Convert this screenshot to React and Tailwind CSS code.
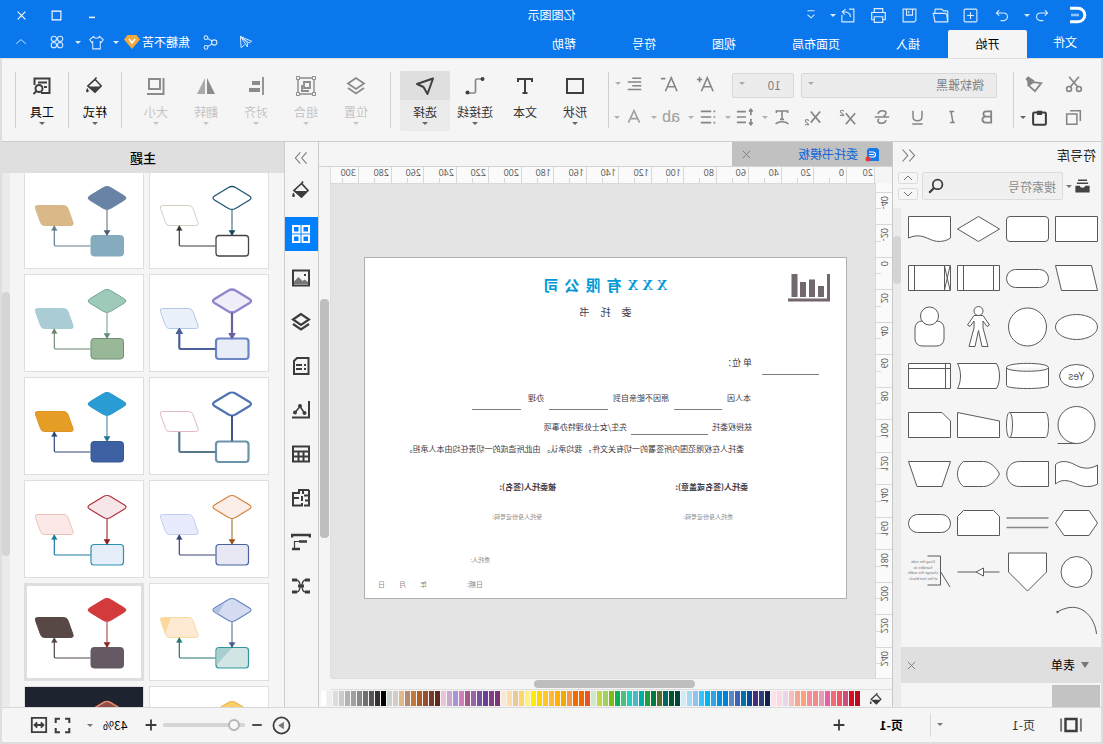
import { useState } from 'react';

const SWATCHES = [
    '#b90c1c', '#d90b22', '#c8507a', '#ee5566', '#ee6b75', '#e9609f', '#e89bb5', '#ef8d88', '#f1909b', '#ffa07a', '#f2a894', '#f5bfb8', '#e8d5ea', '#ffd6e4', '#ffe0e6',
    '#12204d', '#2a3f75', '#4a2c7f', '#0a4a94', '#0070ab', '#4063b3', '#5b87c8', '#0080d6', '#0090dd', '#30a5e6', '#00b5ee', '#33c3ff', '#8fc3ee', '#a5daf0', '#d0ecf8',
    '#00443a', '#00552c', '#00695f', '#556b2f', '#007a42', '#259b40', '#00aea4', '#4fb8c4', '#1fd1bb', '#4abf7e', '#0bb156', '#80bb11', '#a0d060', '#c0d844', '#cde8cc',
    '#e9541f', '#ee6a00', '#f06c00', '#f79646', '#f2a900', '#ffb000', '#ffb833', '#ffc52b', '#ffd500', '#ffec00', '#fff27a', '#ffd56b', '#e8ca9a', '#ffdcaa', '#fce8d0',
    '#7a3576', '#863c80', '#6a3f99', '#77539e', '#9867a3', '#a3598a', '#d080b8', '#ab94d5', '#c9a9cc', '#edc3dc',
    '#5f2a1c', '#763a2c', '#964f30', '#b05e28', '#c27a3c', '#b38b73', '#dfb98a', '#d6cbc4', '#cad3cb',
    '#000000', '#37302f', '#555555', '#706f6f', '#8a8a89', '#a0a09f', '#b2b4b3', '#c9cccb', '#dcdcdc', '#eeeeee', '#ffffff',
];

// d = diamond, r = rectangle, p = parallelogram, each [fill, stroke, stroke width]
// a = arrow down, b = arrow up, each [colour, width, head]
const THEMES = [
    { d: ['#fff', '#1d5470', 1.3], r: ['#fff', '#444', 1.3], p: ['#fff', '#d5cdc0', 1], a: ['#6d909b', 1.5, '#12475c'], b: ['#3c3c3c', 1.2, '#333'] },
    { d: ['#6983a6', '#6983a6', 1], r: ['#85abbe', '#85abbe', 1], p: ['#d9b987', '#d9b987', 1], a: ['#9299aa', 1.5, '#4c5a70'], b: ['#607d8f', 1.2, '#607d8f'] },
    { d: ['#efeef9', '#9186cb', 2.4], r: ['#e9edf8', '#6a86c5', 2.2], p: ['#ebf1fa', '#b0c8e4', 1], a: ['#6c619c', 2.2, '#6c619c'], b: ['#4c5f96', 2.2, '#4c5f96'] },
    { d: ['#9ecbb9', '#76a393', 1], r: ['#98b898', '#6f9077', 1], p: ['#a9ccd5', '#a9ccd5', 1], a: ['#a1b8b2', 1.5, '#628a7f'], b: ['#64836b', 1.1, '#64836b'] },
    { d: ['#fff', '#5274b3', 2.2], r: ['#fff', '#6b93aa', 2.2], p: ['#fff', '#e0b8c5', 1], a: ['#3d5788', 2, null], b: ['#58788a', 2.2, null] },
    { d: ['#2a9cd4', '#2793c8', 1], r: ['#3d60a2', '#38588f', 1], p: ['#e59d25', '#dc9321', 1], a: ['#74a8c2', 1.5, '#1f7199'], b: ['#2f4678', 1.2, '#2f4678'] },
    { d: ['#fbede8', '#d4833c', 1.2], r: ['#e7e8f3', '#4a62a1', 1.2], p: ['#e7ebfb', '#c3cdf2', 1], a: ['#be9665', 1.5, '#9c5318'], b: ['#364474', 1.2, '#364474'] },
    { d: ['#f6e6e9', '#b1323c', 1.2], r: ['#e4effa', '#2c91b2', 1.2], p: ['#fce9e7', '#eac3b8', 1], a: ['#b86068', 1.5, '#8f1a22'], b: ['#1b7a9e', 1.2, '#1b7a9e'] },
    { d: ['#d3dcf0', '#6786c0', 1.2], r: ['#d2e4e3', '#30969a', 1.2], p: ['#fee9d3', '#f4dc9e', 1], a: ['#8494b8', 1.5, '#47608f'], b: ['#21766e', 1.2, '#21766e'], shade: ['#b3c2e3', '#a7cfcd', '#ffd79e'] },
    { d: ['#d23a3c', '#d23a3c', 1], r: ['#655a63', '#655a63', 1], p: ['#584845', '#584845', 1], a: ['#bd7678', 1.5, '#8e2326'], b: ['#50454a', 1.2, '#50454a'], selected: true },
    { d: ['#ffd06a', '#eab84a', 1.2], r: ['#fff', '#d9a53a', 1.2], p: ['#fff', '#ccc', 1], a: ['#aaa', 1.5, '#777'], b: ['#777', 1.2, '#777'] },
    { d: ['#8d4f4a', '#e6866d', 1.6], r: ['#333', '#fff', 1.2], p: ['#333', '#ccc', 1], a: ['#aaa', 1.5, '#aaa'], b: ['#aaa', 1.2, '#aaa'], dark: true },
];

const SHAPES = [
    ['rect', <path d="M3.5 12.5h42v25h-42z" />],
    ['rounded', <rect x="3.5" y="12.5" width="42" height="25" rx="3.5" />],
    ['diamond', <path d="M24.5 12.5l21 12.5-21 12.5L3.5 25z" />],
    ['document', <path d="M3.5 12.5h42V34c-13-6-19 2-28 3.3-5 .7-11-.8-14-3.300z" />],
    ['data', <path d="M9.500 12.500h36l-6 25h-36z" />],
    ['terminator', <rect x="3.500" y="16.500" width="42" height="18" rx="9" />],
    ['process', <path d="M3.5 12.5h42v25h-42zM9.5 12.500v25M39.500 12.500v25" />],
    ['process-x', <path d="M3.5 12.5h42v25h-42zM9.5 12.500v25M39.500 12.500v25M4 13l5.500 24M9.500 13L4 37" />],
    ['ellipse', <ellipse cx="24.500" cy="25" rx="21" ry="12.500" />],
    ['circle', <circle cx="24.500" cy="25" r="19" />],
    ['person', <g><path d="M20 13.500h9l6.500 9.500-2.500 1.500-4-5.500v7l5 18.500h-6l-3.500-16-3.500 16h-6l5-18.500v-7l-4 5.500-2.500-1.500z" /><circle cx="24.500" cy="9" r="4.500" /></g>],
    ['user', <g><rect x="10" y="19" width="29" height="25" rx="7" /><circle cx="24.500" cy="14" r="9" /></g>],
    ['yes', <g><ellipse cx="24.500" cy="25" rx="17" ry="11.500" /><text x="24.500" y="28.500" textAnchor="middle" fontSize="10" fill="#555" stroke="none">Yes</text></g>],
    ['cylinder', <path d="M3.5 16.500c0-5.500 42-5.500 42 0v18c0 4-42 4-42 0zc0 5 42 5 42 0" />],
    ['stored', <path d="M6.500 12.500h39c-4 7-4 18 0 25h-39c-4-6-4-19 0-25z" />],
    ['internal', <path d="M3.5 12.5h42v25h-42zM3.500 17.500h42M8.500 12.500v25" />],
    ['tape', <g><circle cx="24.500" cy="25" r="18.500" /><path d="M24.500 43.500h19" /></g>],
    ['direct', <path d="M6.500 12.500h36c4 0 4 25 0 25h-36c-4 0-4-25 0-25zM42.500 12.500c-4 0-4 25 0 25" />],
    ['manual', <path d="M3.500 21l42-8.500v25h-42z" />],
    ['card', <path d="M3.500 21l8.500-8.500h33.500v25h-42z" />],
    ['wave', <path d="M3.500 16c7 4.500 15 4 22 0s15-5 20-.5V35c-5-4.500-12-4.500-20-.5-8 4-16 4-22 .5z" />],
    ['delay', <path d="M3.500 12.500h29c17 0 17 25 0 25h-29z" />],
    ['display', <path d="M3.500 25c3-6 9-12.500 16-12.500h20c8 6 8 19 0 25h-20c-7 0-13-6.500-16-12.500z" />],
    ['trapezoid', <path d="M3.500 12.500h42l-8.500 25h-25z" />],
    ['hexagon', <path d="M12 12.500h25l8.500 12.500-8.500 12.500h-25L3.500 25z" />],
    ['parallel', <path d="M3.500 20h42M3.500 29.500h42" stroke="#888" strokeWidth="1.500" />],
    ['loop', <path d="M3.500 18.500l6-6h30l6 6v19h-42z" />],
    ['pill', <rect x="3.500" y="16.500" width="42" height="18" rx="9" />],
    ['connector', <circle cx="24.500" cy="25" r="15.500" />],
    ['offpage', <path d="M5.500 6h38v19l-19 19-19-19z" />],
    ['arrow', <path d="M3.500 25h16M27 25h18.500M19.500 21v8l7.500-4z" />],
    ['note', (
        <g>
            <path d="M26.500 9H13.500v29h13M13.500 24.500L4 40" fill="none" />
            <g fill="#777" stroke="none" fontSize="4" textAnchor="middle">
                <text x="31" y="16">Drag the side</text>
                <text x="31" y="22">handles to</text>
                <text x="31" y="27">change the width</text>
                <text x="31" y="33">of the text block.</text>
            </g>
        </g>
    )],
    ['arc', <g><path d="M4.500 38C6 22 18 8 34 12q5 1 9.500 4" fill="none" /><circle cx="43.500" cy="16" r=".8" fill="#555" /></g>],
];

const H_LABELS = [0, 20, 40, 60, 80, 100, 120, 140, 160, 180, 200, 220, 240, 260, 280, 300];
const V_LABELS = [-40, -20, 0, 20, 40, 60, 80, 100, 120, 140, 160, 180, 200, 220, 240];

function Icon({ size = 20, w = 1.6, className = '', children }) {
    return (
        <svg width={size} height={size} viewBox="0 0 20 20" fill="none" stroke="currentColor" strokeWidth={w} className={`shrink-0 ${className}`} aria-hidden="true">
            {children}
        </svg>
    );
}

function Caret({ className = '' }) {
    return (
        <svg width="6" height="3" viewBox="0 0 6 3" fill="currentColor" className={`shrink-0 ${className}`} aria-hidden="true">
            <path d="M0 0h6L3 3z" />
        </svg>
    );
}

function Bucket({ size = 20 }) {
    return (
        <Icon size={size} w={1.7}>
            <path d="M8 1.500l2 3M9.500 3.500L17 10.500 9.500 17 3 10.500z" />
            <path d="M3.500 11h13l-7 6.500z" fill="currentColor" stroke="none" />
            <path d="M17.500 12.500c2 3 1.500 4.500 0 4.500s-2-1.500 0-4.500z" fill="currentColor" stroke="none" />
        </Icon>
    );
}

const Layers = ({ size = 20, w = 1.8 }) => (
    <Icon size={size} w={w}>
        <path d="M10 2l8 5.500-8 5.500-8-5.500zM2 12l8 5.500 8-5.500" />
    </Icon>
);

function IconButton({ label, className = '', children }) {
    return (
        <button type="button" aria-label={label} className={`flex items-center justify-center shrink-0 ${className}`}>
            {children}
        </button>
    );
}

function TitleBar() {
    const tabs = ['插入', '页面布局', '视图', '符号', '帮助'];
    return (
        <header className="bg-[#0a78ec] text-white text-xs shrink-0">
            <div className="grid grid-cols-3 h-[30px] items-center">
                <div className="flex items-center text-blue-100">
                    <svg width="18" height="18" viewBox="0 0 18 18" fill="none" className="ml-4 mr-4" aria-hidden="true">
                        <path d="M17 2.200H9a6.800 6.800 0 0 0 0 13.600h8" stroke="#fff" strokeWidth="3" />
                        <path d="M8 9h8" stroke="#8fc4ff" strokeWidth="2.500" />
                    </svg>
                    <IconButton label="撤销" className="w-[22px]"><Icon size={14} w={1.500}><path d="M6 3L2 7l4 4M2 7h10c7 0 8 9 1 11H8" /></Icon></IconButton>
                    <Caret className="mx-[1px]" />
                    <IconButton label="重做" className="w-[42px]"><Icon size={14} w={1.500}><path d="M14 3l4 4-4 4M18 7H8c-7 0-8 9-1 11h5" /></Icon></IconButton>
                    <IconButton label="新建" className="w-5"><Icon size={15} w={1.500}><rect x="1.500" y="1.500" width="17" height="17" rx="1.500" /><path d="M10 5.500v9M5.500 10h9" /></Icon></IconButton>
                    <IconButton label="打开" className="w-10"><Icon size={17} w={1.400}><path d="M1.500 17.500V5.500q0-1 1-1h4l2-2h7q1 0 1 1v4M1.500 17.500h15l2-10H5q-2 0-2.500 2z" /></Icon></IconButton>
                    <IconButton label="保存" className="w-[22px]"><Icon size={15} w={1.500}><path d="M1.500 1.500h17v17h-15l-2-2zM6 1.500v8h8v-8M11 4v3" /></Icon></IconButton>
                    <IconButton label="打印" className="w-10"><Icon size={17} w={1.400}><path d="M5 6V2h10v4M5 15H2V6.500h16V15h-3M5 11.500h10V18H5z" /></Icon></IconButton>
                    <IconButton label="导出" className="w-[22px]"><Icon size={15} w={1.500}><path d="M8 1.500H1.500v17h16V9M6 12c0-5 4-7 10-7M12.500 1.500L17 5l-3.500 4" /></Icon></IconButton>
                    <Caret className="ml-px" />
                    <IconButton label="自定义" className="w-[38px]"><Icon size={14} w={1.500}><path d="M5 4h10M5 9.500l5 4.500 5-4.500" /></Icon></IconButton>
                </div>
                <h1 className="text-center leading-5">亿图图示</h1>
                <div className="flex justify-end items-center pr-1">
                    <IconButton label="最小化" className="w-[35px]"><Icon size={12} w={2.500}><path d="M5 14h10" /></Icon></IconButton>
                    <IconButton label="最大化" className="w-[35px]"><Icon size={11} w={2}><path d="M2 2h16v16H2z" /></Icon></IconButton>
                    <IconButton label="关闭" className="w-[35px]"><Icon size={11} w={2}><path d="M3 3l14 14M17 3L3 17" /></Icon></IconButton>
                </div>
            </div>
            <nav className="flex h-7">
                <a href="#file" className="w-[76px] text-center leading-6">文件</a>
                <a href="#home" className="w-[79px] text-center leading-7 bg-[#f5f5f5] text-black rounded-t-[2px]">开始</a>
                {tabs.map((t) => (
                    <a key={t} href={`#${t}`} className="px-7 leading-7">{t}</a>
                ))}
                <div className="ml-auto flex items-center text-blue-100 h-6 pr-1">
                    <IconButton label="发送" className="w-9"><Icon size={14} w={1.400}><path d="M18 2L2 9l3.500 2.500zM18 2L8 11v6zM18 2l-1 16-5-4" /></Icon></IconButton>
                    <IconButton label="分享" className="w-9"><Icon size={15} w={1.400}><circle cx="5" cy="10" r="3.500" /><circle cx="16" cy="3.500" r="2.500" /><circle cx="16" cy="16.500" r="2.500" /><path d="M8 8l6-3.500M8 12l6 3.500" /></Icon></IconButton>
                    <a href="#user" className="flex items-center text-white ml-[2px]">
                        焦糖不苦
                        <svg width="16" height="14" viewBox="0 0 16 14" className="ml-[2px]" aria-hidden="true">
                            <path d="M3.500 0h9L16 4.500 8 14 0 4.500z" fill="#f3a93c" />
                            <path d="M5 4l3 4 3-4" fill="none" stroke="#fff" strokeWidth="1.500" />
                        </svg>
                    </a>
                    <Caret className="ml-[5px]" />
                    <IconButton label="皮肤" className="w-8"><Icon size={15} w={1.400}><path d="M6 2L1 6l2.500 4L5 9v9.500h10V9l1.500 1L19 6l-5-4c-1 3-7 3-8 0z" /></Icon></IconButton>
                    <Caret />
                    <IconButton label="应用" className="w-9"><Icon size={14} w={1.500}><circle cx="5.500" cy="5.500" r="3.800" /><circle cx="14.500" cy="5.500" r="3.800" /><circle cx="5.500" cy="14.500" r="3.800" /><circle cx="14.500" cy="14.500" r="3.800" /></Icon></IconButton>
                    <IconButton label="收起功能区" className="w-[35px]"><Icon size={12} w={1.500}><path d="M2 13l8-7 8 7" /></Icon></IconButton>
                </div>
            </nav>
        </header>
    );
}

const Sep = () => <div className="w-px h-14 mt-px bg-[#cfcfcf] shrink-0" />;

function BigButton({ label, icon, disabled, active, strong, noCaret }) {
    return (
        <button
            type="button"
            disabled={disabled}
            className={`w-[50px] h-[60px] flex flex-col items-center shrink-0 rounded-[2px] text-xs ${active ? 'bg-[#ebebeb]' : ''} ${disabled ? 'text-[#c4c4c4]' : strong ? 'text-black' : 'text-[#333]'}`}
        >
            <span className={`w-full h-[29px] flex items-center justify-center rounded-t-[2px] ${active ? 'bg-[#dfdfdf]' : ''} ${disabled ? 'text-[#8b8b8b]' : 'text-[#3f3f3f]'}`}>{icon}</span>
            <span className="leading-5 mt-[2px]">{label}</span>
            {!noCaret && <Caret className={disabled ? 'text-[#c4c4c4]' : 'text-[#666]'} />}
        </button>
    );
}

function DropIcon({ label, children }) {
    return (
        <IconButton label={label} className="w-[37px]">
            <span className="w-[26px] flex justify-center">{children}</span>
            <Caret className="text-[#b0b0b0] mr-1 ml-px" />
        </IconButton>
    );
}

const selectClass = 'appearance-none h-[25px] w-full rounded-[2px] border border-[#d8d8d8] bg-[#ececec] text-xs text-[#808080] outline-none';

function Ribbon() {
    return (
        <div className="flex h-[83px] pt-3 border-b border-[#cdcdcd] text-[#858585] shrink-0">
            <div className="w-[87px] pl-[7px] flex flex-col gap-[9px]">
                <div className="flex h-[25px]">
                    <IconButton label="剪切" className="w-10"><Icon size={18} w={1.800}><circle cx="4.500" cy="15.500" r="2.700" /><circle cx="15.500" cy="15.500" r="2.700" /><path d="M6 13L15.500 2M14 13L4.500 2" /></Icon></IconButton>
                    <IconButton label="格式刷" className="w-10"><Icon size={18} w={2}><path d="M11 8l-9 1 7 9 7-6.500z" /><path d="M9.500 6l7.500 7 .5-6 2-2.500-3-3-3 2z" fill="currentColor" stroke="none" /></Icon></IconButton>
                </div>
                <div className="flex h-6">
                    <IconButton label="复制" className="w-10"><Icon size={17} w={1.800}><path d="M6 6h12v12H6zM2 14V2h12" /></Icon></IconButton>
                    <IconButton label="粘贴" className="w-10 text-[#3c3c3c]">
                        <Icon size={17} w={2.400}><rect x="2.500" y="4" width="15" height="14.500" rx="1.500" /><path d="M7 2h6v5H7z" fill="currentColor" stroke="none" /></Icon>
                        <Caret className="ml-[5px] text-[#666]" />
                    </IconButton>
                </div>
            </div>
            <Sep />
            <div className="w-[404px] pl-2 flex flex-col gap-[9px]">
                <div className="flex h-[25px] pl-2">
                    <label className="relative w-[196px] text-[#aaa]">
                        <select aria-label="字体" className={`${selectClass} pl-3`}><option>微软雅黑</option></select>
                        <Caret className="absolute right-[7px] top-[11px]" />
                    </label>
                    <label className="relative w-[62px] ml-[7px] text-[#aaa]">
                        <select aria-label="字号" className={`${selectClass} pl-3`}><option>10</option></select>
                        <Caret className="absolute right-[7px] top-[11px]" />
                    </label>
                    <IconButton label="增大字号" className="w-9 ml-[9px]"><Icon size={18} w={1.800}><path d="M1 18L7.500 3 14 18M3.500 13h8M13 5h6M16 2v6" /></Icon></IconButton>
                    <IconButton label="减小字号" className="w-9"><Icon size={18} w={1.800}><path d="M1 18L7.500 3 14 18M3.500 13h8M14 4h5" /></Icon></IconButton>
                    <div className="ml-[3px] flex"><DropIcon label="对齐"><Icon size={15} w={2.200}><path d="M1 3h12M1 8h18M1 13h12M1 18h18" /></Icon></DropIcon></div>
                </div>
                <div className="flex h-6">
                    <IconButton label="加粗" className="w-[35px]"><Icon size={14} w={2.600}><path d="M4 2h7c6 0 5 7.500 0 7.500H4zM4 9.500h8c6.500 0 5.500 8.500 0 8.500H4z" /></Icon></IconButton>
                    <IconButton label="斜体" className="w-[35px]"><Icon size={14} w={2.200}><path d="M7 2h7M6 18h7M11.500 2L8.500 18" /></Icon></IconButton>
                    <IconButton label="下划线" className="w-[35px]"><Icon size={15} w={2}><path d="M4 1v8c0 7 12 7 12 0V1M3 18.500h14" /></Icon></IconButton>
                    <IconButton label="删除线" className="w-[35px]"><Icon size={16} w={2}><path d="M1 10h18M15 6c-1-5-10-5-10-1 0 2 1 3 3 4M5 14c1 5 10 5 10 1 0-1-.5-2-1-3" /></Icon></IconButton>
                    <IconButton label="上标" className="w-[35px]"><Icon size={17} w={2}><path d="M1 5l11 13M12 5L1 18" /><path d="M14.500 3c0-2 4-2 4 0 0 1.500-4 3-4 4.500h4.500" strokeWidth="1.200" /></Icon></IconButton>
                    <IconButton label="下标" className="w-[35px]"><Icon size={17} w={2}><path d="M1 3l11 13M12 3L1 16" /><path d="M14.500 14c0-2 4-2 4 0 0 1.500-4 3-4 4.500h4.500" strokeWidth="1.200" /></Icon></IconButton>
                    <DropIcon label="文字效果"><Icon size={16} w={2}><path d="M3 5V2.500h14V5M10 2.500V13M7.500 13h5M2 18.500c4-3.500 12-3.500 16 0" /></Icon></DropIcon>
                    <DropIcon label="行距"><Icon size={18} w={1.800}><path d="M9 4h10M9 10h10M9 16h10M3.500 2v6M1.500 4l2-2.500L5.500 4M3.500 12v6M1.500 16l2 2.500L5.500 16" /></Icon></DropIcon>
                    <DropIcon label="项目符号"><Icon size={16} w={2}><path d="M6 3h13M6 10h13M6 17h13M1 3h2M1 10h2M1 17h2" /></Icon></DropIcon>
                    <DropIcon label="文字间距"><span className="text-base leading-5 text-[#a0a0a0] font-['Liberation_Sans']">ab</span></DropIcon>
                    <DropIcon label="字体颜色"><Icon size={16} w={2} className="text-[#a0a0a0]"><path d="M3 17L10 2l7 15M5 12h10" /></Icon></DropIcon>
                </div>
            </div>
            <Sep />
            <div className="flex px-2">
                <BigButton label="形状" icon={<Icon w={2}><path d="M2 3h16v14H2z" /></Icon>} />
                <BigButton label="文本" noCaret icon={<Icon w={2}><path d="M3 6V3h14v3M10 3v14M7.500 17h5" /></Icon>} />
                <BigButton label="连接线" icon={<Icon w={1.700}><path d="M3 3h5q1.500 0 1.500 1.500v11q0 1.500 1.500 1.500h5" stroke="#888" /><circle cx="2.500" cy="3" r="2" fill="currentColor" stroke="none" /><circle cx="17.500" cy="16.500" r="2" fill="currentColor" stroke="none" /></Icon>} />
                <BigButton label="选择" active icon={<Icon w={2}><path d="M2 2.500l16 5.500-6.500 3L7.500 18z" strokeLinejoin="round" /></Icon>} />
            </div>
            <div className="pl-px"><Sep /></div>
            <div className="flex px-2 ml-px">
                <BigButton label="位置" disabled icon={<Layers />} />
                <BigButton label="组合" disabled icon={<Icon w={1.400}><path d="M2 2h16v16H2z" /><path d="M6 6h6v6H6zM14 9v6H8v-1" strokeWidth="1.800" /><path d="M.5.500h3v3h-3zM16.500.500h3v3h-3zM.5 16.500h3v3h-3zM16.500 16.500h3v3h-3z" fill="#f5f5f5" strokeWidth="1" /></Icon>} />
                <BigButton label="对齐" disabled icon={<Icon w={1.800}><path d="M3 1v18" /><path d="M6 5h8v4H6zM6 12h11v4H6z" fill="currentColor" stroke="none" /></Icon>} />
                <BigButton label="翻转" disabled icon={<Icon><path d="M9 2v16H1z" fill="#8b8b8b" stroke="none" /><path d="M11 2v16h8z" fill="#aaa" stroke="none" /></Icon>} />
                <BigButton label="大小" disabled icon={<Icon w={2}><path d="M6 3h11v10H6zM2.500 2v16H19" /></Icon>} />
            </div>
            <div className="pl-px"><Sep /></div>
            <div className="px-px"><BigButton label="样式" strong icon={<Bucket size={19} />} /></div>
            <Sep />
            <div className="px-px"><BigButton label="工具" strong icon={<Icon w={2}><path d="M11 17H2.500V2.500h15V9M5 6.500h9M5 11h3" /><circle cx="13" cy="12.500" r="3.500" /><path d="M15.500 15l3 3" /></Icon>} /></div>
            <Sep />
        </div>
    );
}

function SymbolPanel() {
    return (
        <aside className="w-[209px] border-r border-[#c8c8c8] flex flex-col min-h-0 shrink-0">
            <div className="flex items-center justify-between h-[26px] pl-[5px] pr-2">
                <h2 className="text-[13px] leading-5">符号库</h2>
                <IconButton label="收起" className="text-[#777]"><Icon size={15} w={1.500}><path d="M9 2l-7 8 7 8M18 2l-7 8 7 8" /></Icon></IconButton>
            </div>
            <div className="flex items-center mt-[4px] h-7 pl-[11px]">
                <Icon size={15} w={2} className="text-[#444]"><path d="M4 1.500h12M2.500 5.500h15" /><path d="M.5 9h6c0 3.500 7 3.500 7 0h6v9h-19z" fill="currentColor" stroke="none" /></Icon>
                <Caret className="ml-[3px] text-[#777]" />
                <label className="relative ml-[3px] w-[141px]">
                    <input type="text" aria-label="搜索符号" placeholder="搜索符号" className="w-full h-7 rounded-[2px] border border-[#dcdcdc] bg-[#f0f0f0] pl-[6px] text-xs placeholder-[#8c8c8c] outline-none" />
                    <Icon size={16} w={2.200} className="absolute right-[6px] top-[6px] text-[#3c3c3c]"><circle cx="8" cy="8" r="6" /><path d="M12.500 12.500l6 6" strokeWidth="2.800" /></Icon>
                </label>
                <div className="flex flex-col gap-1 ml-1 text-[#777]">
                    <IconButton label="上一个" className="w-5 h-3 rounded-[2px] border border-[#dcdcdc]"><Icon size={10} w={2}><path d="M2 14l8-8 8 8" /></Icon></IconButton>
                    <IconButton label="下一个" className="w-5 h-3 rounded-[2px] border border-[#dcdcdc]"><Icon size={10} w={2}><path d="M2 6l8 8 8-8" /></Icon></IconButton>
                </div>
            </div>
            <div className="flex flex-1 min-h-0 pt-[4px] justify-between">
                <div className="w-[200px] flex flex-col overflow-hidden">
                    <div className="grid grid-cols-[repeat(4,49px)] fill-white stroke-[#5a5a5a] font-['Liberation_Sans']">
                        {SHAPES.map(([name, drawing]) => (
                            <svg key={name} width="49" height="49" viewBox="0 0 49 49">{drawing}</svg>
                        ))}
                    </div>
                    <div className="flex items-center h-9 mt-[2px] shrink-0 bg-[#dfdfdf] pl-3 pr-1 text-xs text-black">
                        <svg width="8" height="6" viewBox="0 0 8 6" fill="#777" aria-hidden="true"><path d="M0 0h8L4 6z" /></svg>
                        <h3 className="ml-[6px]">表单</h3>
                        <IconButton label="关闭" className="ml-auto mr-[2px] text-[#777]"><Icon size={9} w={2}><path d="M2 2l16 16M18 2L2 18" /></Icon></IconButton>
                    </div>
                    <div className="w-12 flex-1 mt-[2px] ml-px bg-[#c3c3c3]" />
                </div>
                <div className="w-2 mt-[4px] bg-[#ebebeb]">
                    <div className="h-12 mt-7 rounded bg-[#d4d4d4]" />
                </div>
            </div>
        </aside>
    );
}

const Line = ({ className }) => <span className={`h-px bg-[#7d7d7d] ${className}`} />;

function Letter() {
    return (
        <article className="w-[483px] h-[342px] ml-7 mt-[73px] shrink-0 border border-[#b0b0b0] bg-white text-[8px] leading-3 text-[#3f3a44] whitespace-nowrap">
            <div className="h-[50px] pt-4 pl-4">
                <svg width="42" height="28" viewBox="0 0 42 28" fill="#73676f" aria-hidden="true">
                    <path d="M0 0h3v24.500h39v3H0zM6 12h6v11H6zM15 5.500h6V23h-6zM24 8h6v15h-6zM32.500 0h6v23h-6z" />
                </svg>
            </div>
            <h2 className="-mt-[33px] flex justify-center gap-[6px] text-[15px] leading-5 font-bold text-[#0099d6]">
                <span className="font-['Liberation_Serif']">X X X</span>
                <span>有</span><span>限</span><span>公</span><span>司</span>
            </h2>
            <h3 className="mt-[9px] flex justify-center gap-[11px] text-[10px] leading-4">
                <span>委</span><span>托</span><span>书</span>
            </h3>
            <div className="mt-[35px] pl-[27px] flex items-end gap-[10px] text-[9px]">
                <Line className="w-[57px]" />
                <span className="leading-4 mb-1">单 位：</span>
            </div>
            <div className="mt-[17px] pl-[95px] flex items-end gap-[5px]">
                <span className="mb-[6px]">本人因</span>
                <Line className="w-12" />
                <span className="mb-[6px]">原因不能亲自到</span>
                <Line className="w-[59px]" />
                <span className="mb-[6px]">办理</span>
                <Line className="w-[49px] ml-[2px]" />
            </div>
            <div className="mt-[11px] pl-[94px] flex items-end gap-1">
                <span className="mb-[2px]">兹授权委托</span>
                <Line className="w-[77px]" />
                <span className="mb-[2px]">先生/女士处理特办事项</span>
            </div>
            <p className="mt-2 pl-[102px]">委托人在权限范围内所签署的一切有关文件， 我均承认。 由此所造成的一切责任均由本人承担。</p>
            <div className="mt-[26px] pl-[98px] flex font-bold">
                <span className="w-48">委托人(签名或盖章):</span>
                <span>被委托人(签名):</span>
            </div>
            <div className="mt-[18px] pl-[113px] flex text-[6px] text-[#8a8a8a]">
                <span className="w-[191px]">委托人身份证号码:</span>
                <span>受托人身份证号码:</span>
            </div>
            <div className="mt-[31px] pl-[356px] text-[6px] text-[#8a8a8a]">委托人:</div>
            <div className="mt-3 pl-[363px] pr-[13px] flex justify-between text-[7px] text-[#8a8a8a]">
                <span>日期:</span>
                <span className="flex gap-[14px]"><span>年</span><span>月</span><span>日</span></span>
            </div>
        </article>
    );
}

function Canvas() {
    return (
        <main className="flex-1 min-w-0 flex flex-col">
            <div className="flex h-[25px] border-b border-[#d2d2d2] shrink-0">
                <div className="w-40 flex items-center bg-[#c1c1c1] pl-3 pr-[10px] text-xs">
                    <svg width="15" height="15" viewBox="0 0 15 15" aria-hidden="true">
                        <path d="M3 1h8l2 2v11H1V3z" fill="#1677e8" />
                        <path d="M11 5H7a2.500 2.500 0 0 0 0 5h4M6 7.500h5" fill="none" stroke="#fff" strokeWidth="1.200" />
                        <circle cx="12" cy="12" r="2.500" fill="#e33" />
                    </svg>
                    <a href="#doc" className="ml-[7px] text-[#0f68d8]">委托书模板</a>
                    <IconButton label="关闭文档" className="ml-auto text-[#777]"><Icon size={9} w={2}><path d="M2 2l16 16M18 2L2 18" /></Icon></IconButton>
                </div>
            </div>
            <div className="flex flex-1 min-h-0">
                <div className="w-[17px] mt-4 shrink-0 overflow-hidden bg-[#fafafa] border-r border-[#d8d8d8] text-[9px] leading-3 text-[#555] font-['Open_Sans']">
                    <div className="h-[9px]" />
                    {V_LABELS.map((n) => (
                        <div key={n} className="odd:h-[33px] even:h-8 border-t border-[#d8d8d8] pt-[3px] bg-[linear-gradient(#d8d8d8,#d8d8d8)] bg-[length:5px_1px] bg-[position:right_center] bg-no-repeat">
                            <span className="[writing-mode:vertical-rl] rotate-180 block ml-[2px]">{n}</span>
                        </div>
                    ))}
                </div>
                <div className="flex-1 min-w-0 flex flex-col">
                    <div className="flex h-[17px] shrink-0 overflow-hidden bg-[#fafafa] border-b border-[#d8d8d8] text-[9px] leading-3 text-[#555] font-['Open_Sans']">
                        <div className="w-7 shrink-0 pl-px border-l border-[#d8d8d8]">20</div>
                        {H_LABELS.map((n) => (
                            <div key={n} className="odd:w-8 even:w-[33px] shrink-0 border-l border-[#d8d8d8] pl-[2px] bg-[linear-gradient(#d8d8d8,#d8d8d8)] bg-[length:1px_5px] bg-[position:center_bottom] bg-no-repeat">{n}</div>
                        ))}
                    </div>
                    <div className="flex-1 min-h-0 overflow-hidden bg-[#e4e4e4]">
                        <Letter />
                    </div>
                </div>
                <div className="w-3 shrink-0 border-l border-[#dedede] px-px">
                    <div className="mt-[132px] h-[239px] rounded bg-[#bebebe]" />
                </div>
            </div>
            <div className="h-3 mr-3 shrink-0 border-y border-[#dedede] py-px">
                <div className="ml-[197px] w-[161px] h-2 rounded bg-[#bebebe]" />
            </div>
            <div className="flex h-[17px] pt-px shrink-0 overflow-hidden">
                <span className="w-8 flex items-center justify-center text-[#3c3c3c]"><Bucket size={14} /></span>
                <div className="flex gap-px">
                    {SWATCHES.map((c) => (
                        <button key={c} type="button" aria-label={c} className="w-[5px] h-[15px]" style={{ backgroundColor: c }} />
                    ))}
                </div>
            </div>
        </main>
    );
}

function SideTools() {
    const tools = [
        ['填充', <Bucket />],
        ['主题', <Icon w={2}><path d="M2 2h6.500v6.500H2zM11.500 2H18v6.500h-6.500zM2 11.500h6.500V18H2zM11.500 11.500H18V18h-6.500z" /></Icon>],
        ['图片', <Icon w={2}><path d="M2 2.500h16v15H2z" /><path d="M3 16v-2l3.500-2.500 2 1.500 4-4 4.500 4.500V16z" fill="#777" stroke="none" /><path d="M5 6h2v2H5z" fill="currentColor" stroke="none" /></Icon>],
        ['图层', <Layers w={2.200} />],
        ['文档', <Icon w={2}><path d="M2.500 2H14l3 3v13H2.500zM5 9h2M9 9h6M5 13h2M9 13h6" /></Icon>],
        ['图表', <Icon w={2}><path d="M2 1v16.500h17" /><path d="M6.500 13L11 6.500l5 6" strokeWidth="1.500" /><circle cx="6.500" cy="13" r="2" fill="currentColor" stroke="none" /><circle cx="11" cy="6" r="2" fill="currentColor" stroke="none" /><circle cx="16" cy="12.500" r="2" fill="currentColor" stroke="none" /></Icon>],
        ['表格', <Icon w={2}><path d="M2 2.500h16v15H2zM2 7.500h16M2 12.500h16M7.500 7.500v10M12.500 7.500v10" /></Icon>],
        ['平面图', <Icon w={2}><path d="M2 2h10v3h6v12.500h-9V15M2 2v15.500h5M2 7.500h5M8 2v4M12 10h6M2 12.500h4M9 8v5" /></Icon>],
        ['甘特图', <Icon w={2.600}><path d="M1 5.500V3h18v2.500M4 9.500h8M11 17h8" /><path d="M12 9.500h4.500V16" strokeWidth="1.200" /></Icon>],
        ['思维导图', <Icon w={3.200}><path d="M1 4h5M14 4h5M1 16h5M14 16h5M7 10h6" /><path d="M5 4c5 0 3 6 5 6s0-6 5-6M5 16c5 0 3-6 5-6s0 6 5 6" strokeWidth="1.300" /></Icon>],
    ];
    return (
        <div className="w-[35px] border-x border-[#cdcdcd] flex flex-col items-center shrink-0 text-[#3c3c3c]">
            <IconButton label="展开" className="h-[31px] w-full text-[#777]"><Icon size={14} w={1.500}><path d="M2 2l7 8-7 8M11 2l7 8-7 8" /></Icon></IconButton>
            <div className="flex flex-col gap-[10px] w-full">
                {tools.map(([name, icon]) => (
                    <IconButton key={name} label={name} className={`h-[34px] w-full ${name === '主题' ? 'bg-[#0080ff] text-white' : ''}`}>{icon}</IconButton>
                ))}
            </div>
        </div>
    );
}

function ThemeCard({ theme }) {
    const { d, r, p, a, b, shade, selected, dark } = theme;
    return (
        <button type="button" aria-label="主题样式" className={`h-[98px] overflow-hidden border-[#dedede] ${selected ? 'border-[3px]' : 'border'} ${dark ? 'bg-[#1e242f]' : 'bg-white'}`}>
            <svg viewBox="0 0 120 98" width="120" height="98" className={selected ? '-m-[3px]' : '-m-px'} strokeLinejoin="round">
                <path d="M37 15.500q2 0 3.500 1l14 8.500q3 2 0 4l-14 8.500q-3.500 2-7 0l-14-8.500q-3-2 0-4l14-8.500q1.500-1 3.500-1z" fill={d[0]} stroke={d[1]} strokeWidth={d[2]} />
                <rect x="20.500" y="64.500" width="32.500" height="20.500" rx="3" fill={r[0]} stroke={r[1]} strokeWidth={r[2]} />
                <path d="M80.500 34.500h26q3 0 2 3l-5 14q-1 3-4 3h-26q-3.500 0-2.500-3l5-14q1-3 4.500-3z" fill={p[0]} stroke={p[1]} strokeWidth={p[2]} />
                {shade && (
                    <g>
                        <path d="M44 19l10 7q2 1.500 0 3l-3 2z" fill={shade[0]} />
                        <path d="M37 65h13q2.500 0 2.500 3v14z" fill={shade[1]} />
                        <path d="M98 35h9q1.500 0 1 2l-4.500 13z" fill={shade[2]} />
                    </g>
                )}
                <path d="M37 38.500V64" stroke={a[0]} strokeWidth={a[1]} />
                {a[2] && <path d="M34 59.500h6L37 64.500z" fill={a[2]} stroke={a[2]} strokeWidth={a[1] - 1} />}
                <path d="M53.500 75h35q1.200 0 1.200-1.200V55" fill="none" stroke={b[0]} strokeWidth={b[1]} />
                {b[2] && <path d="M86.700 59.500h6l-3-5z" fill={b[2]} stroke={b[2]} strokeWidth={b[1] - 1} />}
            </svg>
        </button>
    );
}

function ThemePanel() {
    return (
        <aside className="w-[282px] flex flex-col min-h-0 shrink-0">
            <h2 className="h-[31px] leading-8 bg-[#dfdfdf] text-center text-[13px] font-medium text-black shrink-0">主题</h2>
            <div className="flex flex-1 min-h-0 overflow-hidden justify-between">
                <div className="grid grid-cols-[120px_120px] gap-[5px] content-start pl-[15px] -mt-[2px]">
                    {THEMES.map((t, i) => <ThemeCard key={i} theme={t} />)}
                </div>
                <div className="w-2 bg-[#ebebeb]">
                    <div className="mt-[119px] h-[264px] rounded bg-[#d5d5d5]" />
                </div>
            </div>
        </aside>
    );
}

function StatusBar() {
    const [zoom, setZoom] = useState(8);
    return (
        <footer className="flex items-center h-[35px] border-t border-[#d8d8d8] text-xs text-[#3c3c3c] shrink-0">
            <IconButton label="页面视图" className="w-[60px]"><Icon size={22} w={1.800}><path d="M5 4.500h10v11H5z" strokeWidth="2.200" /><path d="M1 4v12M19 4v12" stroke="#777" /></Icon></IconButton>
            <label className="relative w-[110px] text-[#777]">
                <select aria-label="页面" className="appearance-none w-full h-6 pl-[6px] text-xs text-[#333] outline-none"><option>页-1</option></select>
                <Caret className="absolute right-[6px] top-[10px]" />
            </label>
            <div className="w-px h-6 bg-[#d8d8d8]" />
            <a href="#page-1" className="ml-[27px] font-bold text-black">页-1</a>
            <IconButton label="添加页面" className="ml-[34px]"><Icon size={12} w={3}><path d="M10 1v18M1 10h18" /></Icon></IconButton>
            <div className="ml-auto flex items-center pr-7">
                <IconButton label="播放" className="mr-[7px]"><Icon size={19} w={1.800}><circle cx="10" cy="10" r="8.500" /><path d="M7.500 6v8l6-4z" fill="#777" stroke="none" /></Icon></IconButton>
                <IconButton label="缩小" className="w-4 mr-1"><Icon size={12} w={3}><path d="M2 10h16" /></Icon></IconButton>
                <input
                    type="range"
                    aria-label="缩放"
                    min="0"
                    max="100"
                    value={zoom}
                    onChange={(e) => setZoom(Number(e.target.value))}
                    className="appearance-none w-[82px] h-1 rounded bg-[#d5d5d5] outline-none [&::-webkit-slider-thumb]:appearance-none [&::-webkit-slider-thumb]:size-3 [&::-webkit-slider-thumb]:rounded-full [&::-webkit-slider-thumb]:border-2 [&::-webkit-slider-thumb]:border-[#b5b5b5] [&::-webkit-slider-thumb]:bg-[#f8f8f8]"
                />
                <IconButton label="放大" className="ml-1 w-4"><Icon size={12} w={3}><path d="M10 1v18M1 10h18" /></Icon></IconButton>
                <button type="button" className="ml-4 flex items-center text-black">43%<Caret className="ml-[10px] text-[#777]" /></button>
                <IconButton label="全屏" className="ml-4"><Icon size={17} w={2.400}><path d="M2 7V2h5M13 2h5v5M18 13v5h-5M7 18H2v-5" /></Icon></IconButton>
                <IconButton label="适应宽度" className="ml-[6px]"><Icon size={18} w={2}><path d="M2 2h16v16H2zM5.500 10h9M8 7l-3 3 3 3M12 7l3 3-3 3" /></Icon></IconButton>
            </div>
        </footer>
    );
}

export default function App() {
    return (
        <div className="h-screen overflow-hidden flex flex-col -scale-x-100 bg-[#f5f5f5] text-[#222] font-['Noto_Sans_CJK_SC',sans-serif]">
            <TitleBar />
            <div className="flex-1 min-h-0 flex flex-col border-t border-x-2 border-b-2 border-[#dedede]">
                <Ribbon />
                <div className="flex flex-1 min-h-0">
                    <SymbolPanel />
                    <Canvas />
                    <SideTools />
                    <ThemePanel />
                </div>
                <StatusBar />
            </div>
        </div>
    );
}
